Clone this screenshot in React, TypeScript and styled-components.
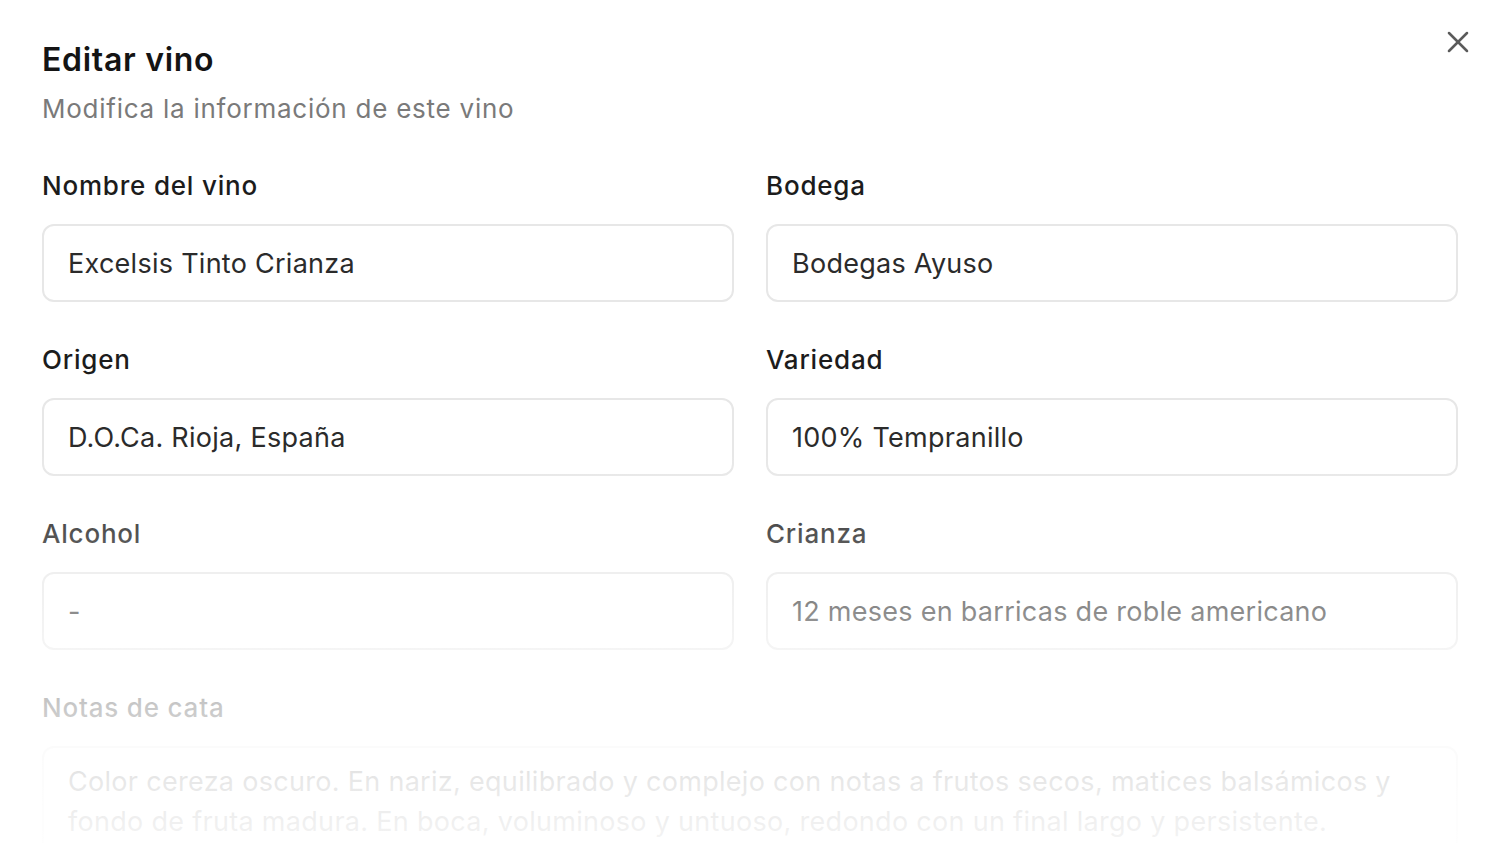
import React from "react";
import styled, { createGlobalStyle } from "styled-components";
import { X } from "lucide-react";

const Global = createGlobalStyle`
  html, body { margin: 0; padding: 0; background: #ffffff; }
  body { font-family: Inter, "Noto Sans", sans-serif; -webkit-font-smoothing: antialiased; }
  * { box-sizing: border-box; }
`;

const Dialog = styled.div`
  position: relative;
  width: 1500px;
  height: 843px;
  overflow: hidden;
  background: #ffffff;
  padding: 40px 42px 0 42px;
`;

const Header = styled.header`
  display: flex;
  flex-direction: column;
  gap: 11px;
`;

const Title = styled.h2`
  margin: 0;
  font-size: 32px;
  line-height: 40px;
  font-weight: 600;
  letter-spacing: 0.7px;
  color: #141414;
`;

const Subtitle = styled.p`
  margin: 0;
  font-size: 26px;
  line-height: 36px;
  font-weight: 400;
  letter-spacing: 0.75px;
  color: #7a7a7a;
`;

const CloseButton = styled.button`
  position: absolute;
  top: 24px;
  right: 24px;
  width: 36px;
  height: 36px;
  padding: 0;
  border: none;
  background: transparent;
  color: #5a5a5a;
  display: flex;
  align-items: center;
  justify-content: center;
  cursor: pointer;
`;

const Form = styled.form`
  margin-top: 41px;
  display: grid;
  grid-template-columns: 1fr 1fr;
  column-gap: 32px;
  row-gap: 40px;
`;

const Field = styled.div<{ $wide?: boolean }>`
  display: flex;
  flex-direction: column;
  gap: 20px;
  grid-column: ${(p) => (p.$wide ? "1 / -1" : "auto")};
`;

const Label = styled.label`
  font-size: 26px;
  line-height: 36px;
  font-weight: 500;
  color: #1c1c1c;
  letter-spacing: 0.8px;
`;

const Input = styled.div`
  height: 78px;
  border: 2px solid #e7e7e7;
  border-radius: 12px;
  padding: 0 24px;
  display: flex;
  align-items: center;
  font-size: 27px;
  font-weight: 400;
  color: #2b2b2b;
  letter-spacing: 0.27px;
  background: #fff;
`;

const TextArea = styled.div`
  min-height: 140px;
  border: 2px solid #e7e7e7;
  border-radius: 12px;
  padding: 14px 40px 14px 24px;
  font-size: 27px;
  line-height: 40px;
  color: #2b2b2b;
  letter-spacing: 0.3px;
`;

const Fade = styled.div`
  position: absolute;
  left: 0;
  right: 0;
  top: 450px;
  bottom: 0;
  pointer-events: none;
  background: linear-gradient(
    to bottom,
    rgba(255, 255, 255, 0) 0px,
    rgba(255, 255, 255, 0.24) 83px,
    rgba(255, 255, 255, 0.45) 160px,
    rgba(255, 255, 255, 0.76) 257px,
    rgba(255, 255, 255, 0.89) 331px,
    rgba(255, 255, 255, 0.95) 393px
  );
`;

const fields = [
  { label: "Nombre del vino", value: "Excelsis Tinto Crianza" },
  { label: "Bodega", value: "Bodegas Ayuso" },
  { label: "Origen", value: "D.O.Ca. Rioja, España" },
  { label: "Variedad", value: "100% Tempranillo" },
  { label: "Alcohol", value: "-" },
  { label: "Crianza", value: "12 meses en barricas de roble americano" },
];

export default function App() {
  return (
    <>
      <Global />
      <Dialog>
        <Header>
          <Title>Editar vino</Title>
          <Subtitle>Modifica la información de este vino</Subtitle>
        </Header>
        <CloseButton aria-label="Cerrar">
          <X size={36} strokeWidth={1.7} />
        </CloseButton>
        <Form>
          {fields.map((f) => (
            <Field key={f.label}>
              <Label>{f.label}</Label>
              <Input>{f.value}</Input>
            </Field>
          ))}
          <Field $wide>
            <Label>Notas de cata</Label>
            <TextArea>
              Color cereza oscuro. En nariz, equilibrado y complejo con notas a frutos secos, matices balsámicos y
              fondo de fruta madura. En boca, voluminoso y untuoso, redondo con un final largo y persistente.
            </TextArea>
          </Field>
        </Form>
        <Fade />
      </Dialog>
    </>
  );
}
